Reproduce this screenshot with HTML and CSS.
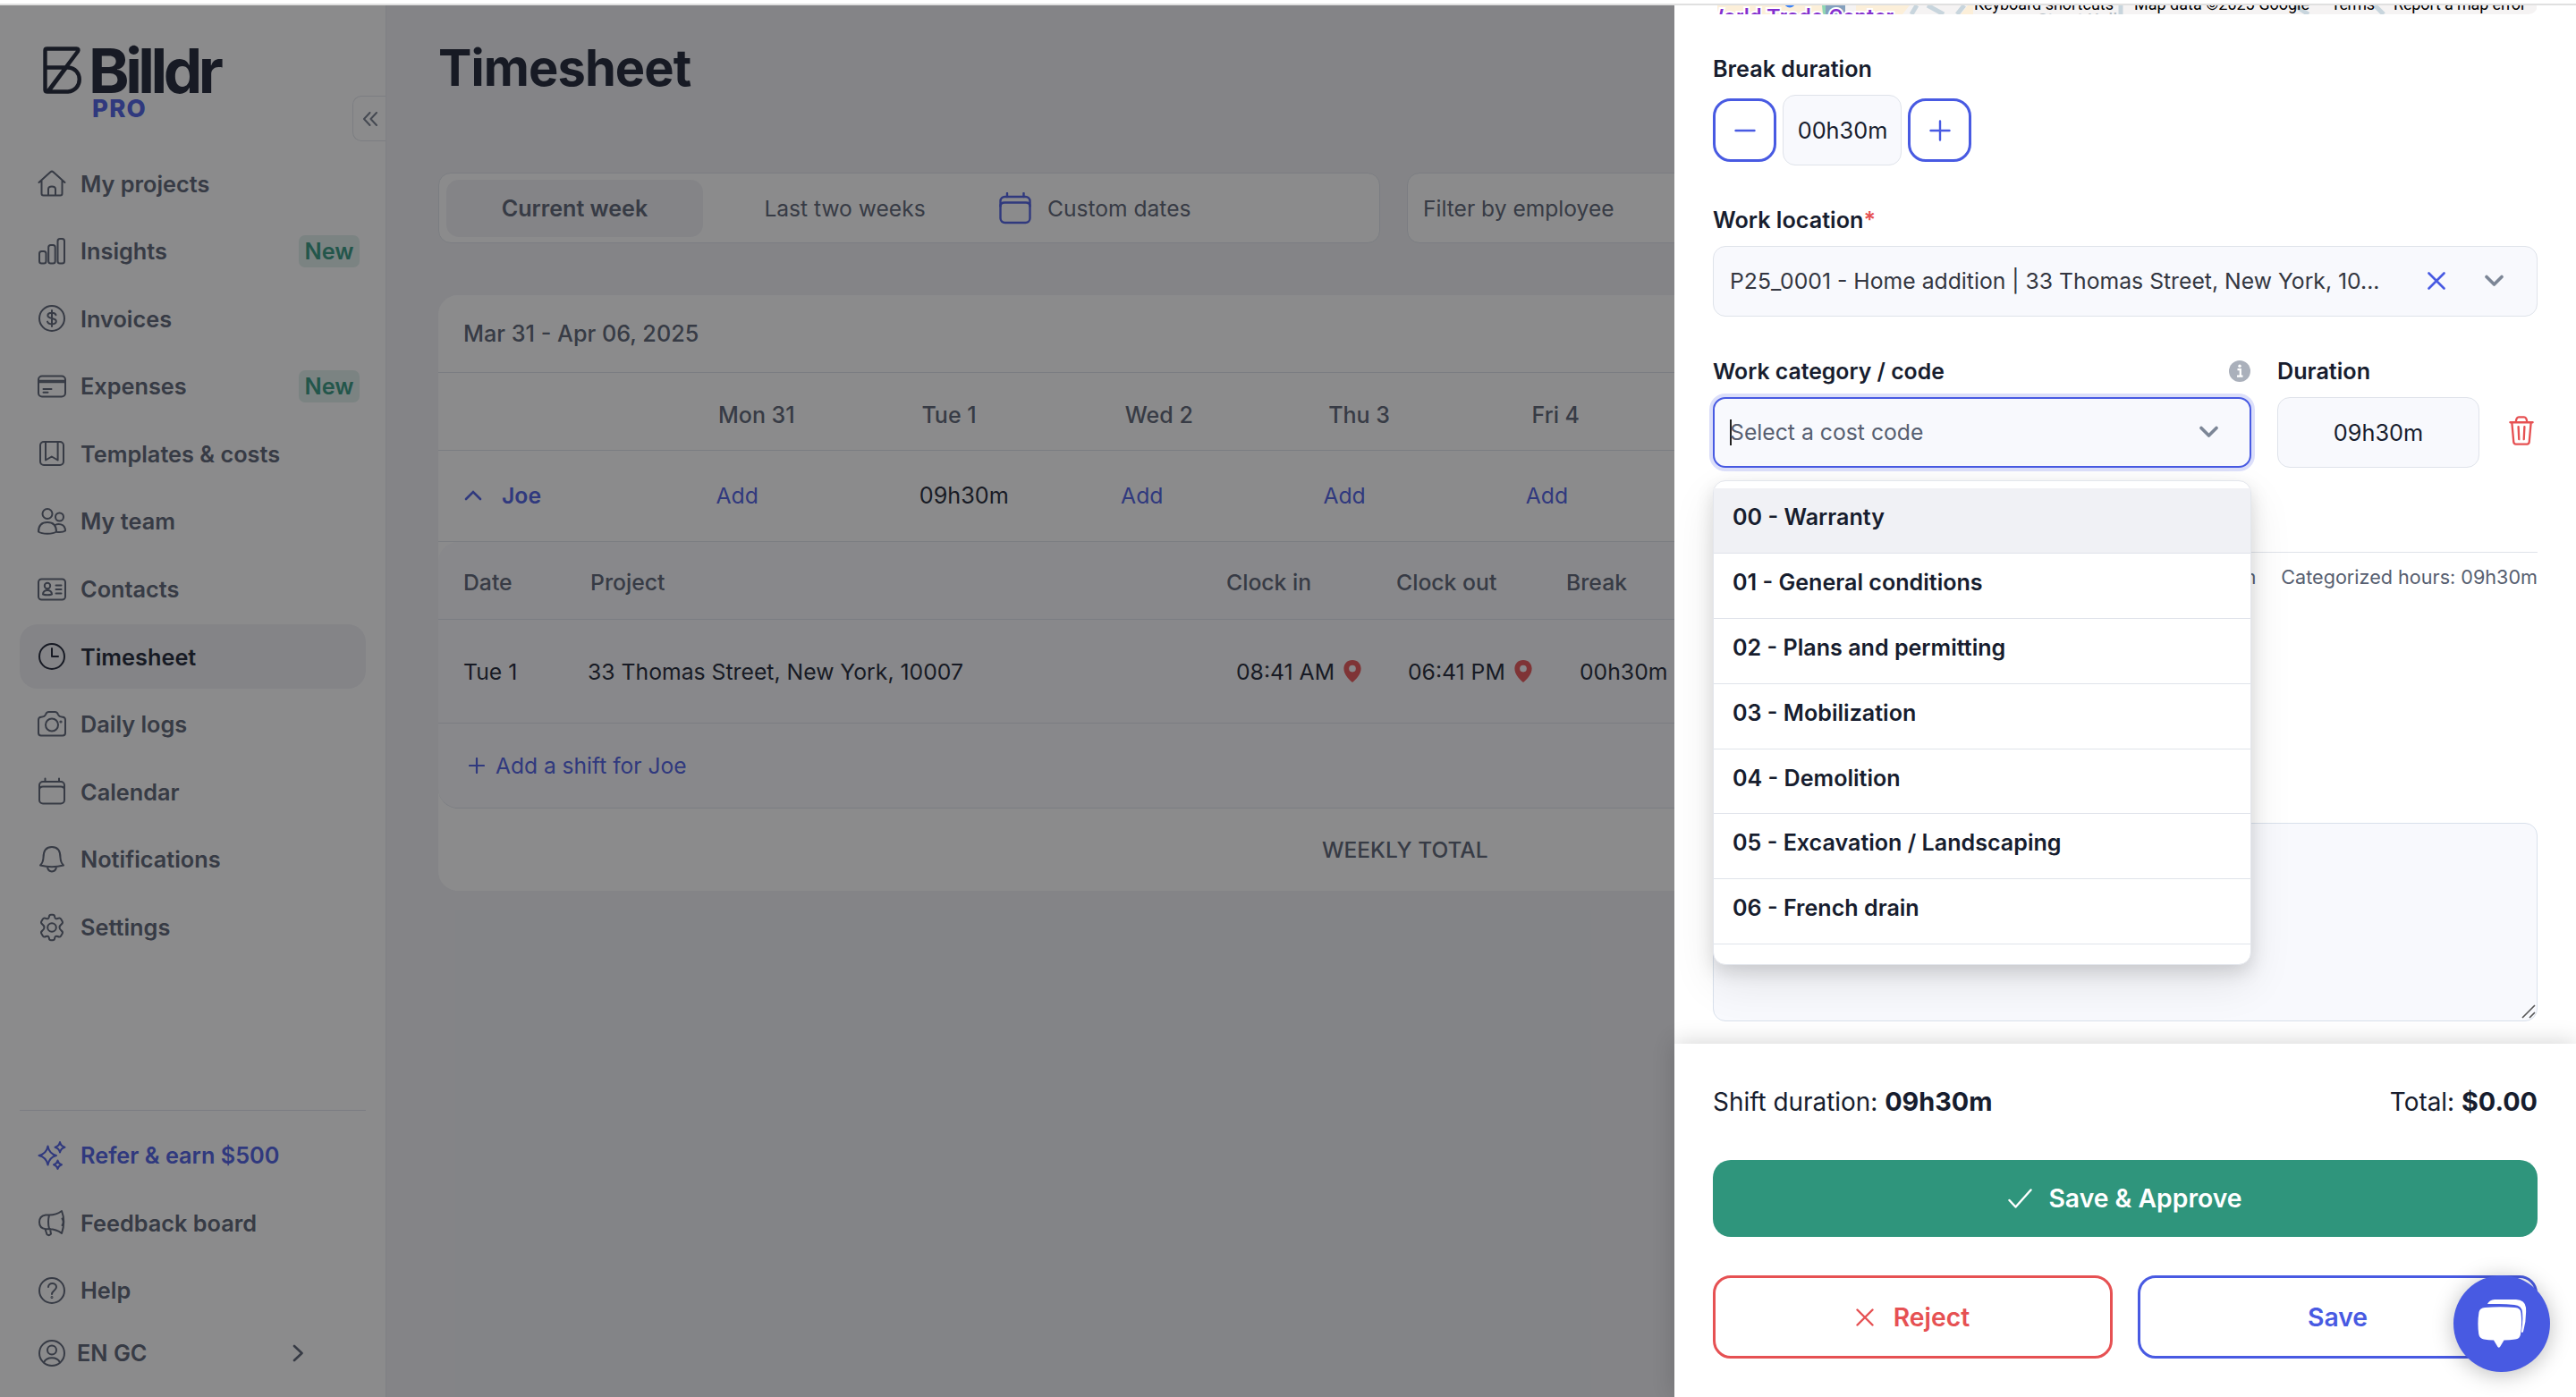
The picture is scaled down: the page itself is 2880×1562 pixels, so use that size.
FILE: index.html
```html
<!DOCTYPE html>
<html lang="en">
<head>
<meta charset="utf-8">
<title>Timesheet</title>
<link rel="stylesheet" href="styles.css">
</head>
<body>
<div class="topstrip"></div>
<div class="app">
  <aside class="sidebar">
    <div class="logo">
      <svg class="mark" viewBox="0 0 44 53" fill="none" stroke="currentColor" stroke-width="4.4" stroke-linejoin="round"><path d="M4.500 2.500H37.500Q40.500 2.500 39 5.500L6 49.500M2.500 4.500V48.500Q2.500 50.500 5 50.500H28C45 49 45 24.500 28 23.500H2.500V4.500Q2.500 2.500 4.500 2.500M6 50.500L26 23.500"/></svg>
      <div><div class="brand">Billdr</div><div class="pro">PRO</div></div>
    </div>
    <div class="collapse"><svg viewBox="0 0 16 16" fill="none" stroke="currentColor" stroke-width="2" stroke-linecap="round" stroke-linejoin="round"><path d="M7.500 1L1 8l6.500 7M15 1L8.500 8l6.500 7"/></svg></div>
    <nav class="nav">
      <a class="item"><svg class="ico" viewBox="0 0 32 32"><path d="M1.500 15L14.500 3.200q1.500-1.200 3 0L30.500 15M4.500 13v14.500q0 2 2 2h19q2 0 2-2V13M12 29v-6.500q0-3 4-3t4 3V29"/></svg><span>My projects</span></a>
      <a class="item"><svg class="ico" viewBox="0 0 32 32"><rect x="2" y="16" width="7.500" height="13.500" rx="2.500"/><rect x="12.200" y="9" width="7.500" height="20.500" rx="2.500"/><rect x="22.500" y="2" width="7.500" height="27.500" rx="2.500"/></svg><span>Insights</span><b class="new">New</b></a>
      <a class="item"><svg class="ico" viewBox="0 0 32 32"><circle cx="16" cy="16" r="14"/><path d="M20.500 12.200c-.6-1.700-2.300-2.400-4.500-2.400-2.800 0-4.600 1-4.600 3 0 4.600 9.400 1.800 9.400 6.500 0 2-2 3.100-4.800 3.100-2.500 0-4.500-.9-5-2.800M16 7v18"/></svg><span>Invoices</span></a>
      <a class="item"><svg class="ico" viewBox="0 0 32 32"><rect x="1" y="4.500" width="30" height="23" rx="4"/><path d="M1 11.300h30M6.500 19h9M6.500 22.800h5"/><path d="M1 9.800h30"/></svg><span>Expenses</span><b class="new">New</b></a>
      <a class="item"><svg class="ico" viewBox="0 0 32 32"><rect x="3" y="3" width="26" height="26" rx="4"/><path d="M9 3v20.500l6.800-4 6.800 4V3"/></svg><span>Templates &amp; costs</span></a>
      <a class="item"><svg class="ico" viewBox="0 0 32 32"><circle cx="11" cy="7.500" r="5.500"/><circle cx="24.500" cy="11" r="4.500"/><path d="M1 27.500C1 20.500 5 17 11 17s10 3.500 10 10.500c-4 3-16 3-20 0zM19 20.500c3-2.500 12-2.500 12 6-2 1.300-6 1.600-10 1.200"/></svg><span>My team</span></a>
      <a class="item"><svg class="ico" viewBox="0 0 32 32"><rect x="1" y="4.500" width="30" height="23" rx="3.500"/><circle cx="11" cy="12" r="3.200"/><path d="M6 21.500c0-6 10-6 10 0q-5 1.600-10 0zM20.500 11.500h6M20.500 16h6M20.500 20.500h6"/></svg><span>Contacts</span></a>
      <a class="item active"><svg class="ico" viewBox="0 0 32 32"><circle cx="16" cy="16" r="14"/><path d="M16 7v9h7"/></svg><span>Timesheet</span></a>
      <a class="item"><svg class="ico" viewBox="0 0 32 32"><path d="M1 11q0-3 3-3.200Q8 7.500 9 5q1-3 3.500-3h7q2.500 0 3.500 3 1 2.500 5 2.800 3 .2 3 3.200v14.500q0 3-3 3H4q-3 0-3-3z"/><circle cx="16" cy="16.500" r="7"/><circle cx="26" cy="13" r=".6"/></svg><span>Daily logs</span></a>
      <a class="item"><svg class="ico" viewBox="0 0 32 32"><rect x="2" y="5" width="28" height="24.500" rx="4"/><path d="M2 14q0-3.500 4-3.500h20q4 0 4 3.500M8.500 1.500V5M24 1.500V5"/></svg><span>Calendar</span></a>
      <a class="item"><svg class="ico" viewBox="0 0 32 32"><path d="M3 22.500q3.200-3 3.500-8.500C6.500 6 10 2 16 2s9.500 4 9.500 12q.3 5.500 3.500 8.500-13 3.500-26 0zM11 24.500c1 6.500 9 6.500 10 0"/></svg><span>Notifications</span></a>
      <a class="item"><svg class="ico" viewBox="0 0 32 32"><circle cx="16" cy="16" r="4.800"/><path d="M12.800 4.200q.3-2.400 2.200-2.400h2q1.900 0 2.200 2.400.5 2.800 3.200 1.800 2.600-1.200 3.700.6l1.600 2.600q.9 1.700-1 3.200-2.200 1.700-2.200 3.600t2.200 3.600q1.900 1.500 1 3.200l-1.600 2.600q-1.100 1.800-3.700.6-2.700-1-3.200 1.800-.3 2.400-2.200 2.400h-2q-1.900 0-2.200-2.400-.5-2.800-3.200-1.800-2.600 1.200-3.700-.6l-1.600-2.600q-.9-1.700 1-3.200 2.200-1.700 2.200-3.600t-2.200-3.600q-1.900-1.500-1-3.200l1.600-2.600Q7 4.800 9.600 6q2.700 1 3.200-1.800z"/></svg><span>Settings</span></a>
    </nav>
    <div class="nav lower">
      <a class="item refer"><svg class="ico" viewBox="0 0 32 32"><path d="M11.500 5.500q1.500 8.500 9.500 10.500-8 2-9.500 10.500Q10 18 1.500 16 10 14 11.500 5.500zM25 1q1 4.500 5.500 5.700Q26 8 25 12.500 24 8 19.500 6.700 24 5.500 25 1zM22.500 21.500q.8 3.700 4.500 4.800-3.700 1-4.500 4.700-.8-3.700-4.500-4.700 3.700-1.100 4.500-4.800z"/></svg><span>Refer &amp; earn $500</span></a>
      <a class="item"><svg class="ico" viewBox="0 0 32 32"><path d="M13 7.500Q21 7.500 27 3q4.500 11.500 0 25-6-4.800-14-4.800H9Q2 22.500 2 15.500T9 7.500zM13 7.500q-2 8 0 15.500M27.500 11.500q2.500 4 0 7.500M8.500 23.200l2 6q2.500 2 4.500-.5L14 23"/></svg><span>Feedback board</span></a>
      <a class="item"><svg class="ico" viewBox="0 0 32 32"><circle cx="16" cy="16" r="14"/><path d="M12 12c0-5.500 9-5 9 0 0 4-5 4-5 8"/><circle cx="16" cy="23.500" r=".5"/></svg><span>Help</span></a>
    </div>
    <a class="item user"><svg class="ico" viewBox="0 0 32 32"><circle cx="16" cy="16" r="14"/><circle cx="16" cy="12.500" r="5"/><path d="M7 26.500c3-7 15-7 18 0"/></svg><span>EN GC</span><svg class="chev" viewBox="0 0 12 20" fill="none" stroke="currentColor" stroke-width="2.600" stroke-linecap="round" stroke-linejoin="round"><path d="M2 2l8.500 8L2 18"/></svg></a>
  </aside>
  <main class="main">
    <h1>Timesheet</h1>
    <div class="filters">
      <div class="tabs">
        <span class="tab on">Current week</span>
        <span class="tab">Last two weeks</span>
        <span class="custom"><svg viewBox="0 0 36 36" fill="none" stroke-width="2.400" stroke-linecap="round"><rect x="1.500" y="5" width="33" height="29" rx="5"/><path d="M1.500 15.500q0-4 4.500-4h24q4.500 0 4.500 4M9 1v4M27.500 1v4"/></svg>Custom dates</span>
      </div>
      <div class="empfilter">Filter by employee</div>
    </div>
    <section class="card">
      <div class="range">Mar 31 - Apr 06, 2025</div>
      <div class="days"><span></span><span>Mon 31</span><span>Tue 1</span><span>Wed 2</span><span>Thu 3</span><span>Fri 4</span></div>
      <div class="person"><span class="name"><svg viewBox="0 0 20 12" fill="none" stroke="currentColor" stroke-width="2.600" stroke-linecap="round"><path d="M2 10l8-8 8 8"/></svg>Joe</span><span>Add</span><span class="dark">09h30m</span><span>Add</span><span>Add</span><span>Add</span></div>
      <div class="detail">
        <div class="dhead"><span>Date</span><span>Project</span><span>Clock in</span><span>Clock out</span><span>Break</span></div>
        <div class="drow"><span>Tue 1</span><span>33 Thomas Street, New York, 10007</span>
          <span>08:41 AM<svg class="pin" viewBox="0 0 20 26"><path fill-rule="evenodd" d="M10 0C4 0 0 4.300 0 10c0 6.500 5 12 10 16 5-4 10-9.500 10-16C20 4.300 16 0 10 0zm0 6a4 4 0 1 1 0 8 4 4 0 0 1 0-8z"/></svg></span>
          <span>06:41 PM<svg class="pin" viewBox="0 0 20 26"><path fill-rule="evenodd" d="M10 0C4 0 0 4.300 0 10c0 6.500 5 12 10 16 5-4 10-9.500 10-16C20 4.300 16 0 10 0zm0 6a4 4 0 1 1 0 8 4 4 0 0 1 0-8z"/></svg></span>
          <span>00h30m</span></div>
        <div class="addshift"><svg viewBox="0 0 18 18" fill="none" stroke="currentColor" stroke-width="2.200" stroke-linecap="round"><path d="M9 1v16M1 9h16"/></svg>Add a shift for Joe</div>
      </div>
      <div class="total">WEEKLY TOTAL</div>
    </section>
  </main>
</div>
<div class="overlay"></div>

<aside class="panel">
  <div class="pbody">
    <div class="map">
      <svg width="921" height="10" viewBox="0 0 921 10">
        <rect width="921" height="10" fill="#f5f3f3"/>
        <path d="M0 0h124v10H0zM160 0h60l-8 10h-52zM285 0h6v10h-14z" fill="#fcefd9"/>
        <path d="M126 0h22v10h-22z" fill="#84a0bd"/><path d="M122 0h4v10h-3z" fill="#8fd6b4"/>
        <path d="M228 0l-6 10M240 0l18 10M281 0l-8 10M456 0v10M650 0l16 10M740 0l10 10" stroke="#c8d5dd" stroke-width="5"/>
        <circle cx="86" cy="-4" r="6.500" fill="#3b82f6"/>
        <text x="-9" y="21" class="wtc" textLength="211">World Trade Center</text>
        <text x="347" y="22" class="road" textLength="105">○ Street Hall</text>
        <path d="M0 0h5v10H0z" fill="#fff"/>
        <text x="292" y="4.500" class="credit" textLength="156">Keyboard shortcuts</text>
        <text x="471" y="4.500" class="credit" textLength="196">Map data ©2025 Google</text>
        <text x="691" y="4.500" class="credit" textLength="49">Terms</text>
        <text x="761" y="4.500" class="credit" textLength="148">Report a map error</text>
      </svg>
    </div>
    <label class="lbl">Break duration</label>
    <div class="stepper">
      <button class="sq"><svg viewBox="0 0 24 24"><path d="M1.500 12h21"/></svg></button>
      <div class="box time">00h30m</div>
      <button class="sq"><svg viewBox="0 0 24 24"><path d="M1.500 12h21M12 1.500v21"/></svg></button>
    </div>
    <label class="lbl">Work location<i>*</i></label>
    <div class="box select"><span class="loc">P25_0001 - Home addition | 33 Thomas Street, New York, 10...</span>
      <svg class="clear" viewBox="0 0 20 20"><path d="M1.500 1.500l17 17M18.500 1.500l-17 17"/></svg>
      <svg class="down" viewBox="0 0 22 14"><path d="M2.500 2.500L11 11l8.500-8.500"/></svg></div>
    <div class="coderow">
      <div class="code">
        <label class="lbl cat">Work category / code<svg viewBox="0 0 24 24"><circle cx="12" cy="12" r="12"/><path d="M9.500 10.200h3.300v7M9 17.700h6.500" stroke="#fff" stroke-width="2.200" fill="none"/><circle cx="12" cy="6.200" r="1.700" fill="#fff"/></svg></label>
        <div class="box select focus"><em></em><span>Select a cost code</span><svg class="down" viewBox="0 0 22 14"><path d="M2.500 2.500L11 11l8.500-8.500"/></svg></div>
        <div class="menu"><div class="menulist">
          <div class="opt hl">00 - Warranty</div><div class="opt">01 - General conditions</div><div class="opt">02 - Plans and permitting</div><div class="opt">03 - Mobilization</div><div class="opt">04 - Demolition</div><div class="opt">05 - Excavation / Landscaping</div><div class="opt">06 - French drain</div>
        </div></div>
      </div>
      <div class="dur"><label class="lbl">Duration</label><div class="box time">09h30m</div></div>
      <svg class="trash" viewBox="0 0 28 34"><path d="M1 7.500h26M3 7.500l2 22.500q.3 2.500 2.500 2.500h13q2.200 0 2.500-2.500l2-22.500M7.500 7.500Q8 1.500 11 1.500h6q3 0 3.500 6M10.500 12.500l.7 14.500M17.500 12.500l-.7 14.500"/></svg>
    </div>
    <div class="hours"><span>Total hours: 09h30m</span><span>Categorized hours: 09h30m</span></div>
    <div class="area"><svg viewBox="0 0 16 16"><path d="M1 15L15 1M9 15l6-6"/></svg></div>
  </div>
  <div class="foot">
    <div class="sum"><span>Shift duration: <b>09h30m</b></span><span>Total: <b>$0.00</b></span></div>
    <button class="btn approve"><svg viewBox="0 0 27 22"><path d="M1.500 13l7 7.500L25.500 1.500"/></svg>Save &amp; Approve</button>
    <div class="pair">
      <button class="btn reject"><svg viewBox="0 0 20 20"><path d="M1.500 1.500l17 17M18.500 1.500l-17 17"/></svg>Reject</button>
      <button class="btn save">Save</button>
    </div>
  </div>
</aside>
<div class="chat"><svg viewBox="0 0 56 56"><path d="M12 6Q14 1.500 20 1h24q10 .5 11 9 .8 14-3 27-1.500 2-2 0 2-12 1-22-.8-7.500-9-8-15-1.500-29-1z"/><path d="M9 10q18-1.600 34 0 6 .6 6.500 6 1.400 12-.5 24-.8 5-6 5.500-6 .8-12.500 1L26 54q-1.300 1.500-2.500 0L19 46.500q-6-.2-11-1-5-.8-5.800-6Q.5 27 2.500 15 3.500 10.500 9 10z"/></svg></div>
</body>
</html>
```
FILE: styles.css
```css
* { box-sizing: border-box; }
body { margin: 0; width: 2880px; height: 1562px; overflow: hidden; position: relative; background: #fff; font-family: Inter, "Liberation Sans", sans-serif; font-size: 24.75px; color: #171d2e; white-space: nowrap; }
h1 { margin: 0; }
button { font: inherit; padding: 0; background: #fff; }
.topstrip { height: 6px; border-bottom: 2px solid #e0e0e0; }
.app { display: flex; height: 1556px; }

.sidebar { width: 432px; flex: none; border-right: 1px solid #e6e8ee; background: #fff; position: relative; color: #565e70; }
.logo { display: flex; height: 163px; padding: 46px 0 0 48px; color: #171d2e; }
.mark { width: 44px; height: 53px; margin-right: 7px; }
.brand { font-size: 69px; font-weight: 700; line-height: 51px; letter-spacing: -4.5px; padding-top: 2px; }
.pro { font-size: 27.5px; font-weight: 800; line-height: 24px; margin: 4px 0 0 4px; letter-spacing: 1.2px; color: #485ae2; }
.collapse { position: absolute; right: 0; top: 101px; width: 37px; height: 51px; border: 1px solid #e1e4ea; border-right: 0; border-radius: 10px 0 0 10px; display: flex; align-items: center; padding-left: 11px; color: #737b8b; }
.collapse svg { width: 16px; height: 16px; }
.nav { display: flex; flex-direction: column; gap: 3.6px; padding: 0 22px; }
.item { display: flex; align-items: center; height: 72px; padding: 0 7px 0 20px; border-radius: 20px; font-size: 25.3px; font-weight: 600; }
.ico { width: 32px; height: 32px; margin-right: 16px; fill: none; stroke: currentColor; stroke-width: 2; stroke-linecap: round; stroke-linejoin: round; overflow: visible; }
.active { background: #f0f1f5; color: #171d2e; }
.new { margin-left: auto; width: 68px; height: 36px; line-height: 36px; border-radius: 7px; background: #deefeb; color: #2f957c; font-weight: 600; text-align: center; }
.lower { margin: 168px 22px 0; padding: 14px 0 0; border-top: 1px solid #dfe3ea; }
.refer { color: #485ae2; }
.user { margin: -2px 22px 0; }
.user .ico { margin-right: 12px; }
.chev { width: 12px; height: 20px; margin-left: auto; margin-right: 63px; }

.main { flex: 1; background: #f0f1f5; padding-left: 58px; color: #565e70; overflow: hidden; }
.main h1 { color: #171d2e; font-size: 56px; font-weight: 700; letter-spacing: -.9px; line-height: 60px; padding-top: 40px; height: 187px; }
.filters { display: flex; gap: 30px; }
.tabs { display: flex; align-items: center; width: 1053px; height: 79px; border: 1px solid #dfe3ea; border-radius: 14px; background: #fff; padding-left: 8px; font-size: 24.600px; }
.tab { width: 287px; height: 64px; line-height: 64px; text-align: center; border-radius: 14px; margin-right: 7px; }
.on { background: #f0f1f5; font-size: 25.100px; font-weight: 600; margin-right: 15px; }
.custom { display: flex; align-items: center; gap: 18px; margin-left: 22px; }
.custom svg { width: 36px; height: 36px; stroke: #485ae2; }
.empfilter { width: 700px; height: 79px; line-height: 78px; padding-left: 17px; background: #fff; border: 1px solid #dfe3ea; border-radius: 14px; font-size: 24.600px; }
.card { width: 2300px; margin-top: 58px; background: #fff; border-radius: 22px; overflow: hidden; height: 666px; }
.card > div, .detail > div { border-bottom: 1px solid #dfe3ea; }
.range { height: 87px; line-height: 86px; padding-left: 28px; font-size: 25.200px; font-weight: 500; }
.days { display: grid; grid-template-columns: 313px repeat(5, 227.400px); height: 87px; align-items: center; padding-top: 7px; font-weight: 500; font-size: 25px; }
.person { display: grid; grid-template-columns: 310.500px repeat(5, 226.300px); height: 102px; align-items: center; padding-bottom: 1px; color: #485ae2; }
.name { display: flex; align-items: center; gap: 22px; padding-left: 29px; font-weight: 600; }
.name svg { width: 20px; height: 12px; }
.dark { color: #171d2e; padding-left: 1px; font-size: 25.200px; }
.card > .detail { background: #f8f9fd; border-radius: 22px; height: 298px; }
.dhead { display: grid; grid-template-columns: 142px 711px 190px 190px 200px; padding: 3px 0 0 28px; height: 87px; align-items: center; font-weight: 500; }
.drow { display: grid; grid-template-columns: 139px 725px 192px 192px 200px; padding-left: 28px; height: 116px; align-items: center; color: #171d2e; }
.pin { width: 20px; height: 25px; fill: #e65153; margin-left: 10px; vertical-align: -3px; }
.detail > .addshift { display: flex; align-items: center; gap: 12px; height: 95px; padding-left: 34px; padding-bottom: 1px; color: #485ae2; border: 0; font-size: 24.550px; }
.addshift svg { width: 18px; height: 18px; }
.card > .total { border: 0; height: 93px; line-height: 92px; padding-left: 988px; font-size: 24.500px; font-weight: 500; }

.overlay { position: absolute; inset: 6px 0 0; background: rgba(23, 24, 26, .5); }

.panel { position: absolute; left: 1872px; top: 6px; width: 1008px; height: 1556px; background: #fff; display: flex; flex-direction: column; }
.pbody { flex: 1; padding: 0 43px 0 43px; }
.map { height: 10px; overflow: hidden; border-radius: 0 0 12px 0; margin-bottom: 45px; }
.map svg { display: block; }
.wtc { font: 500 24px Roboto, sans-serif; fill: #8430ce; stroke: #fff; stroke-width: 4px; paint-order: stroke; }
.road { font: 500 18px Roboto, sans-serif; fill: #b4bcc2; }
.credit { font: 18px Roboto, sans-serif; fill: #000; }
.lbl { display: block; height: 32px; line-height: 32px; font-weight: 600; font-size: 25.200px; margin-bottom: 13px; }
.lbl i { font-style: normal; color: #e65153; }
.cat { display: flex; justify-content: space-between; align-items: center; font-size: 24.800px; }
.cat svg { width: 24px; height: 24px; margin-right: 1px; fill: #aab0bb; }
.box { height: 79px; border: 1px solid #dfe3ea; border-radius: 14px; background: #f8f9fd; display: flex; align-items: center; }
.time { justify-content: center; font-size: 25.300px; }
.stepper { display: flex; align-items: center; gap: 7px; margin-bottom: 45px; }
.stepper .time { width: 133px; padding-left: 1px; }
.sq { width: 71px; height: 71px; border: 3px solid #485ae2; border-radius: 20px; display: flex; align-items: center; justify-content: center; }
.sq svg { width: 24px; height: 24px; fill: none; stroke: #485ae2; stroke-width: 2.400; stroke-linecap: round; }
.select { padding: 0 36px 1px 18px; }
.select span { flex: 1; color: #565e70; }
.select .loc { color: #333640; }
.clear { width: 20px; height: 20px; margin-right: 43px; fill: none; stroke: #485ae2; stroke-width: 2.600; stroke-linecap: round; }
.down { width: 23px; height: 14px; fill: none; stroke: #7c8696; stroke-width: 3.600; stroke-linecap: round; stroke-linejoin: round; }
.coderow { display: flex; margin-top: 45px; }
.code { width: 602px; position: relative; margin-right: 29px; }
.focus { border: 2px solid #485ae2; box-shadow: 0 0 0 4px #dcdffa; padding-left: 17px; padding-right: 34px; }
.focus em { width: 2px; height: 29px; background: #222; margin-right: -2px; }
.dur { width: 226px; }
.trash { width: 28px; height: 33px; margin: 66px 0 0 33px; fill: none; stroke: #e65153; stroke-width: 2.400; stroke-linecap: round; stroke-linejoin: round; }
.menu { position: absolute; left: 0; top: 138px; width: 602px; height: 542px; background: #fff; border: 1px solid #e3e6ec; border-radius: 14px; box-shadow: 0 20px 50px rgba(0, 0, 0, .09), 0 8px 20px rgba(0, 0, 0, .13); }
.menulist { padding-top: 8px; }
.opt { height: 72.900px; border-bottom: 1px solid #dfe3ea; padding: 0 0 8px 21px; display: flex; align-items: center; font-weight: 600; font-size: 25.100px; }
.hl { background: #f0f1f5; }
.hours { margin-top: 94px; border-top: 1px solid #dfe3ea; padding-top: 12px; height: 45px; line-height: 30px; display: flex; justify-content: flex-end; gap: 28px; font-size: 21.600px; color: #565e70; }
.area { margin-top: 258px; height: 222px; border: 1px solid #d9e1ec; border-radius: 14px; background: #f8f9fd; display: flex; align-items: flex-end; justify-content: flex-end; }
.area svg { width: 16px; height: 16px; margin: 0 1px 2px; fill: none; stroke: #555; stroke-width: 1.600; }

.foot { position: relative; height: 395px; background: #fff; padding: 47px 43px 0 43px; box-shadow: 0 -2px 24px rgba(0, 0, 0, .16); }
.sum { display: flex; justify-content: space-between; line-height: 36px; font-size: 27.900px; margin-bottom: 47px; }
.sum b { font-size: 28.800px; }
.btn { display: flex; align-items: center; justify-content: center; width: 100%; border-radius: 20px; font-size: 28.300px; font-weight: 600; }
.btn svg { fill: none; stroke: currentColor; stroke-width: 2.400; stroke-linecap: round; stroke-linejoin: round; }
.approve { height: 86px; border: 0; background: #2f957c; color: #fff; }
.approve svg { width: 27px; height: 22px; margin-right: 18px; }
.pair { display: flex; gap: 28px; margin-top: 43px; }
.pair .btn { height: 93px; border: 3px solid; flex: 1; }
.reject { color: #e65153; }
.reject svg { width: 20px; height: 20px; margin-right: 22px; }
.save { color: #485ae2; }
.chat { position: absolute; left: 2743px; top: 1426px; width: 108px; height: 108px; border-radius: 50%; background: #485ae2; box-shadow: 0 3px 24px rgba(0, 0, 0, .26); display: flex; align-items: center; justify-content: center; }
.chat svg { width: 56px; height: 56px; fill: #fff; }
```
